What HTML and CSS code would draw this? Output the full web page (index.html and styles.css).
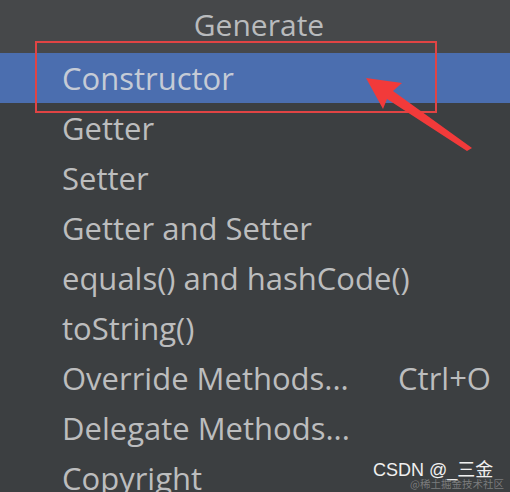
FILE: index.html
```html
<!DOCTYPE html>
<html>
<head>
<meta charset="utf-8">
<link rel="stylesheet" href="styles.css">
</head>
<body>
<div class="popup">
  <div class="title">Generate</div>
  <ul class="list">
    <li class="item selected"><span>Constructor</span></li>
    <li class="item"><span>Getter</span></li>
    <li class="item"><span>Setter</span></li>
    <li class="item"><span>Getter and Setter</span></li>
    <li class="item"><span>equals() and hashCode()</span></li>
    <li class="item"><span>toString()</span></li>
    <li class="item"><span>Override Methods...</span><span class="shortcut">Ctrl+O</span></li>
    <li class="item"><span>Delegate Methods...</span></li>
    <li class="item"><span>Copyright</span></li>
  </ul>
  <div class="highlight-box"></div>
  <svg class="arrow" width="510" height="492" viewBox="0 0 510 492">
    <polygon points="366,78 402,83 393,91 472,148 467,151 387,99 383,109" fill="#f23a3a"/>
  </svg>
  <span class="wm-main">CSDN @_三金</span>
  <span class="wm-sub">@稀土掘金技术社区</span>
</div>
</body>
</html>
```
FILE: styles.css
```css
html, body {
  margin: 0;
  padding: 0;
}
body {
  background: #3c3f41;
  width: 510px;
  height: 492px;
  overflow: hidden;
  font-family: "Open Sans", "Noto Sans", sans-serif;
}
.popup {
  position: relative;
  width: 510px;
  height: 492px;
}
.title {
  height: 53px;
  background: #46484a;
  color: #b9bbbd;
  font-size: 30px;
  line-height: 40px;
  display: flex;
  justify-content: center;
  align-items: center;
  padding-left: 8px;
  box-sizing: border-box;
  padding-bottom: 4px;
}
.list {
  list-style: none;
  margin: 0;
  padding: 0;
}
.item {
  height: 50px;
  display: flex;
  align-items: center;
  padding-left: 62px;
  padding-right: 19px;
  color: #bcbdbe;
  font-size: 31px;
  line-height: 40px;
  box-sizing: border-box;
  white-space: nowrap;
}
.item.selected {
  background: #4b6eaf;
  color: #c5cbd6;
}
.shortcut {
  margin-left: auto;
}
.highlight-box {
  position: absolute;
  left: 35px;
  top: 41px;
  width: 398px;
  height: 68px;
  border: 2px solid #e04444;
}
.arrow {
  position: absolute;
  left: 0;
  top: 0;
}
.wm-main {
  position: absolute;
  left: 373px;
  top: 460px;
  font-family: "Liberation Sans", "Noto Sans CJK SC", sans-serif;
  font-size: 18px;
  line-height: 21px;
  color: #f0f0f0;
  white-space: nowrap;
}
.wm-sub {
  position: absolute;
  left: 410px;
  top: 477px;
  font-family: "Noto Sans CJK SC", sans-serif;
  font-size: 10.5px;
  line-height: 14px;
  color: rgba(200, 200, 200, 0.45);
  white-space: nowrap;
}
```
